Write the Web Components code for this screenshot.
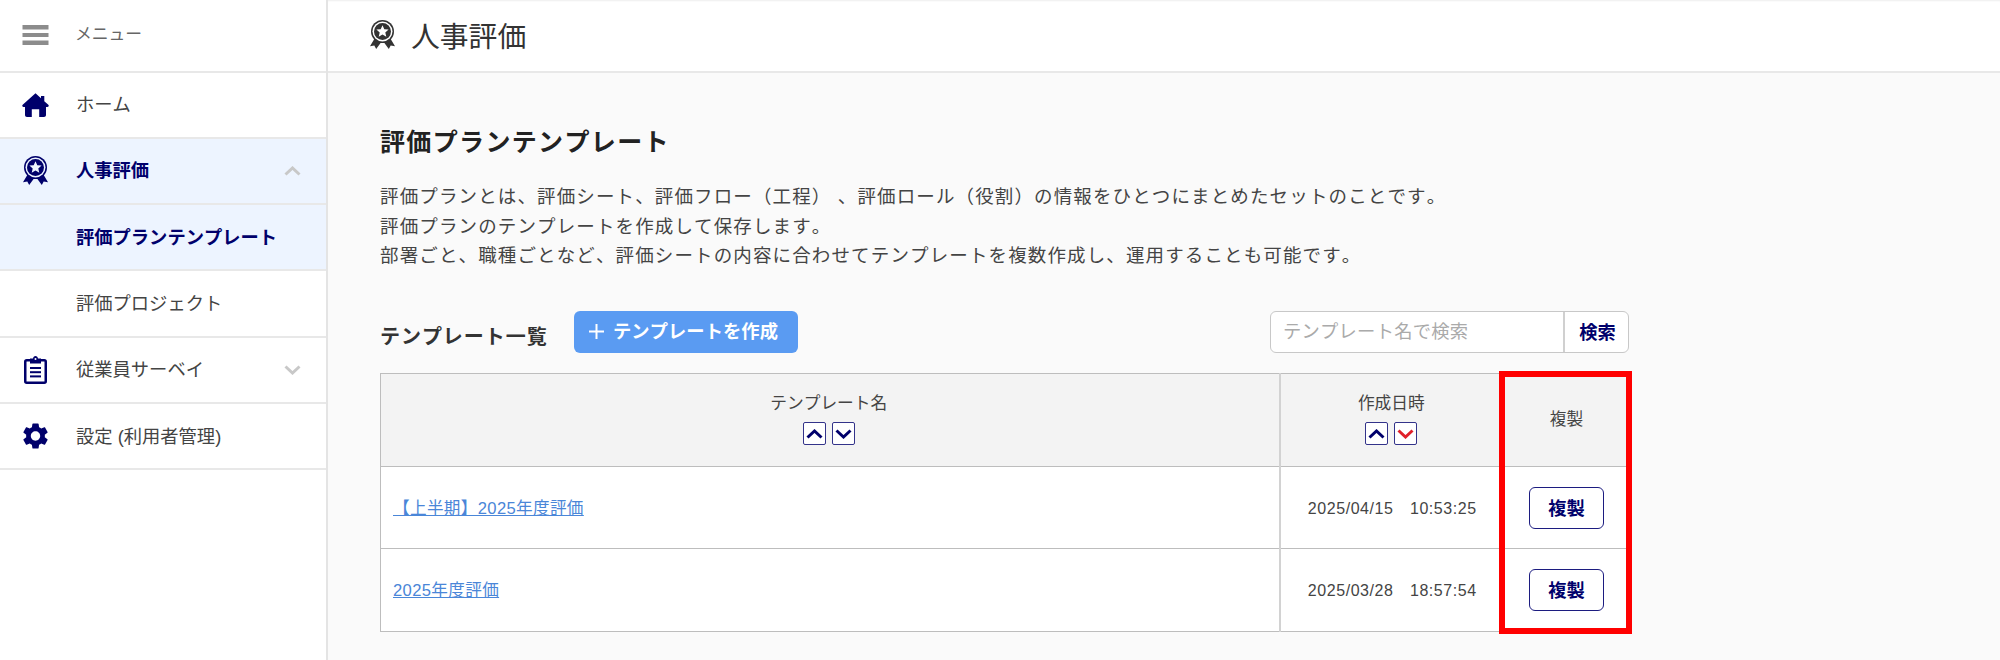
<!DOCTYPE html>
<html lang="ja">
<head>
<meta charset="utf-8">
<title>人事評価</title>
<style>
html,body{margin:0;padding:0;height:660px;overflow:hidden;background:#fafafa;}
body{font-family:"Liberation Sans","Noto Sans CJK JP",sans-serif;color:#333;font-kerning:none;text-spacing-trim:space-all;font-feature-settings:"palt" 0;}
</style>
</head>
<body>
<hr-app></hr-app>
<script>
const NAVY='#00006b';
const ICONS={
 menu:(c)=>`<svg width="27" height="20" viewBox="0 0 27 20"><g fill="${c}"><rect x="0.5" y="0" width="26" height="4.5"/><rect x="0.5" y="8" width="26" height="4"/><rect x="0.5" y="15.5" width="26" height="4.5"/></g></svg>`,
 home:(c)=>`<svg width="27" height="24" viewBox="0 0 27 24"><path fill="${c}" d="M13.5 0.2 L19 5.2 V3 H22.3 V8.2 L26.3 11.8 C27.2 12.7 26.6 14 25.5 14 H24 V22 C24 23.2 23.2 24 22 24 H17.2 V16.2 H9.8 V24 H5 C3.8 24 3 23.2 3 22 V14 H1.5 C0.4 14 -0.2 12.7 0.7 11.8 Z"/></svg>`,
 medal:(c,bg)=>`<svg width="25" height="29" viewBox="0 0 25 29"><path fill="${c}" d="M5.2 17.5 L0 26.2 L4.3 25.4 L6.2 29 L11.5 21.8 Z M19.8 17.5 L25 26.2 L20.7 25.4 L18.8 29 L13.5 21.8 Z"/><circle cx="12.5" cy="11.5" r="11.5" fill="${c}"/><circle cx="12.5" cy="11.5" r="10" fill="${bg}"/><circle cx="12.5" cy="11.5" r="8.5" fill="${c}"/><path fill="${bg}" d="M12.5 5.2 L14.3 9.2 L18.6 9.6 L15.3 12.5 L16.3 16.8 L12.5 14.5 L8.7 16.8 L9.7 12.5 L6.4 9.6 L10.7 9.2 Z"/></svg>`,
 clip:(c)=>`<svg width="23" height="28" viewBox="0 0 23 28"><rect x="1.25" y="4.25" width="20.5" height="22.5" rx="1.5" fill="#fff" stroke="${c}" stroke-width="2.5"/><path fill="${c}" d="M6 2.5 H9 C9.2 .9 10.2 0 11.5 0 C12.8 0 13.8 .9 14 2.5 H17 V7.5 H6 Z"/><circle cx="11.5" cy="3" r="1" fill="#fff"/><g fill="${c}"><rect x="6" y="11" width="11" height="2"/><rect x="6" y="15.2" width="11" height="2"/><rect x="6" y="19.4" width="11" height="2"/></g></svg>`,
 gear:(c)=>`<svg width="25" height="26" viewBox="2.6 2 18.8 20"><path fill="${c}" d="M19.14 12.94c.04-.3.06-.61.06-.94 0-.32-.02-.64-.07-.94l2.03-1.58c.18-.14.23-.41.12-.61l-1.92-3.32c-.12-.22-.37-.29-.59-.22l-2.39.96c-.5-.38-1.03-.7-1.62-.94l-.36-2.54c-.04-.24-.24-.41-.48-.41h-3.84c-.24 0-.43.17-.47.41l-.36 2.54c-.59.24-1.13.57-1.62.94l-2.39-.96c-.22-.08-.47 0-.59.22L2.74 8.87c-.12.21-.08.47.12.61l2.03 1.58c-.05.3-.09.63-.09.94s.02.64.07.94l-2.03 1.58c-.18.14-.23.41-.12.61l1.92 3.32c.12.22.37.29.59.22l2.39-.96c.5.38 1.03.7 1.62.94l.36 2.54c.05.24.24.41.48.41h3.84c.24 0 .44-.17.47-.41l.36-2.54c.59-.24 1.13-.56 1.62-.94l2.39.96c.22.08.47 0 .59-.22l1.92-3.32c.12-.22.07-.47-.12-.61l-2.01-1.58zM12 15.6c-1.98 0-3.6-1.62-3.6-3.6s1.62-3.6 3.6-3.6 3.6 1.62 3.6 3.6-1.62 3.6-3.6 3.6z"/></svg>`,
 up:(c,w=3)=>`<svg width="17" height="10" viewBox="0 0 17 10"><path d="M1.5 8.5 L8.5 2 L15.5 8.5" fill="none" stroke="${c}" stroke-width="${w}"/></svg>`,
 down:(c,w=3)=>`<svg width="17" height="10" viewBox="0 0 17 10"><path d="M1.5 1.5 L8.5 8 L15.5 1.5" fill="none" stroke="${c}" stroke-width="${w}"/></svg>`
};
function define(name,css,html,extra){
  customElements.define(name,class extends HTMLElement{
    constructor(){super();this.attachShadow({mode:'open'});}
    connectedCallback(){
      this.shadowRoot.innerHTML=`<style>${css}</style>`+(typeof html==='function'?html(this):html);
      if(extra)extra(this);
    }
  });
}
define('nav-item',`
 :host{display:flex;box-sizing:border-box;height:66.33px;border-bottom:2px solid #e8e8e8;align-items:center;background:var(--bg,#fff);font-size:18.3px;color:#444;}
 :host([first]){height:72.5px;font-size:16.8px;color:#666;}
 :host([first]) .lb{padding:0 0 1px 0;margin-left:-1px;}
 :host([active]){background:#edf4ff;color:${NAVY};font-weight:700;}
 .ic{width:76px;flex:none;display:flex;justify-content:center;padding-right:6px;box-sizing:border-box;}
 .lb{flex:1;white-space:nowrap;line-height:26px;padding-top:1px;}
 .ch{width:42px;flex:none;display:flex;}
`,(el)=>{
 const i=el.getAttribute('icon'),c=el.getAttribute('chev');
 const bg=el.hasAttribute('active')?'#edf4ff':'#fff';
 const col=i==='menu'?'#8c8c8c':NAVY;
 return `<div class="ic">${i?ICONS[i](col,bg):''}</div><div class="lb"><slot></slot></div>${c?`<div class="ch">${ICONS[c]('#c8c8c8')}</div>`:''}`;
});
define('side-bar',`
 :host{display:block;width:328px;flex:none;box-sizing:border-box;background:#fff;border-right:2px solid #e4e4e4;height:660px;}
`,`<slot></slot>`);
define('top-bar',`
 :host{display:flex;align-items:center;box-sizing:border-box;height:72.5px;background:#fff;border-bottom:2px solid #e8e8e8;padding-left:42px;box-shadow:inset 0 2px 2px -1px #eee;font-size:28.8px;color:#333;}
 .i{display:flex;margin-right:18px;margin-top:-2px;}
 .t{margin-top:-1px;margin-left:-2px;}
`,()=>`<div class="i">${ICONS.medal('#333','#fff')}</div><div class="t"><slot></slot></div>`);
define('blue-button',`
 :host{display:inline-flex;align-items:center;box-sizing:border-box;height:42px;width:224px;padding:0 0 3px 15px;background:#5a9bf2;border-radius:6px;color:#fff;font-size:18.3px;font-weight:700;letter-spacing:.05px;}
 svg{margin-right:9px;flex:none;margin-top:3px;}
`,`<svg width="15" height="15" viewBox="0 0 15 15"><path d="M7.5 0 V15 M0 7.5 H15" stroke="#fff" stroke-width="2"/></svg><slot></slot>`);
define('search-box',`
 :host{display:flex;box-sizing:border-box;width:359px;height:42px;border:1px solid #c8c8c8;border-radius:6px;background:#fff;font-size:18.3px;align-items:stretch;}
 .p{width:294px;box-sizing:border-box;padding-left:12px;color:#aaa;line-height:39px;border-right:2px solid #d0d0d0;white-space:nowrap;letter-spacing:.25px;}
 .b{flex:1;display:flex;align-items:center;justify-content:center;color:${NAVY};font-weight:700;padding:0 0 1px 2px;}
`,()=>`<div class="p">テンプレート名で検索</div><div class="b"><slot></slot></div>`);
define('sort-btns',`
 :host{display:flex;gap:6px;justify-content:center;margin-top:6px;}
 span{display:flex;align-items:center;justify-content:center;box-sizing:border-box;width:23px;height:23px;background:#fff;border:1.5px solid #33338a;border-radius:2px;}
`,(el)=>`<span>${ICONS.up(NAVY)}</span><span>${ICONS.down(el.hasAttribute('red')?'#e0202a':NAVY)}</span>`);
define('copy-btn',`
 :host{display:inline-flex;align-items:center;justify-content:center;box-sizing:border-box;width:75px;height:42px;background:#fff;border:1.5px solid #1c1c80;border-radius:6px;color:${NAVY};font-size:18.3px;font-weight:700;padding-bottom:2px;margin-left:2px;}
`,`<slot></slot>`);
define('template-table',`
 :host{display:block;position:relative;width:1250px;font-size:16.7px;color:#444;}
 table{border-collapse:collapse;table-layout:fixed;width:100%;background:#fff;}
 th,td{border:1px solid #bdbdbd;padding:0;text-align:center;vertical-align:middle;}
 tr>*:nth-child(2){border-left:2px solid #d2d2d2;}
 th{background:#f3f3f3;font-weight:400;height:92px;line-height:24px;}
 th>div{margin-top:-2px;}
 th.a{padding-right:2px;}
 th.b{padding-left:1px;}
 th.c{padding-left:2px;}
 th.c>div{margin-top:0;}
 td{height:79.4px;}
 td.n{text-align:left;padding-left:12px;padding-bottom:2px;}
 a{color:#4a86d8;text-decoration:underline;font-size:16.6px;letter-spacing:.35px;}
 .d{font-size:16px;letter-spacing:.55px;white-space:pre;padding-left:3px;padding-bottom:2px;}
 .red{position:absolute;box-sizing:border-box;top:-2px;bottom:-2px;right:-2px;width:133px;border:6px solid #f00;pointer-events:none;}
`,`<table>
 <colgroup><col style="width:899px"><col style="width:222px"><col></colgroup>
 <tr><th class="a"><div>テンプレート名</div><sort-btns></sort-btns></th><th class="b"><div>作成日時</div><sort-btns red></sort-btns></th><th class="c"><div>複製</div></th></tr>
 <tr><td class="n"><a>【上半期】2025年度評価</a></td><td class="d">2025/04/15　10:53:25</td><td><copy-btn>複製</copy-btn></td></tr>
 <tr><td class="n"><a>2025年度評価</a></td><td class="d">2025/03/28　18:57:54</td><td><copy-btn>複製</copy-btn></td></tr>
</table><div class="red"></div>`);
define('main-panel',`
 :host{display:block;flex:1;background:#fafafa;}
 .c{padding:49.5px 0 0 52px;width:1250px;}
 h1{margin:0;font-size:25px;line-height:40px;letter-spacing:1.35px;font-weight:700;color:#222;white-space:nowrap;}
 p{margin:20px 0 0;font-size:18.5px;line-height:29.6px;letter-spacing:1.13px;color:#444;white-space:nowrap;}
 .tb{display:flex;margin-top:40.2px;align-items:flex-start;}
 h2{margin:10.5px 0 0;width:194px;font-size:20px;line-height:32px;letter-spacing:.95px;font-weight:700;color:#333;white-space:nowrap;}
 .sp{flex:1;}
 .s{margin-right:1px;}
 template-table{margin-top:19.4px;}
`,`<top-bar>人事評価</top-bar><div class="c">
 <h1>評価プランテンプレート</h1>
 <p>評価プランとは、評価シート、評価フロー（工程） 、評価ロール（役割）の情報をひとつにまとめたセットのことです。<br>評価プランのテンプレートを作成して保存します。<br>部署ごと、職種ごとなど、評価シートの内容に合わせてテンプレートを複数作成し、運用することも可能です。</p>
 <div class="tb"><h2>テンプレート一覧</h2><blue-button>テンプレートを作成</blue-button><div class="sp"></div><search-box class="s">検索</search-box></div>
 <template-table></template-table>
</div>`);
define('hr-app',`
 :host{display:flex;width:2000px;height:660px;overflow:hidden;}
`,`<side-bar>
 <nav-item first icon="menu">メニュー</nav-item>
 <nav-item icon="home">ホーム</nav-item>
 <nav-item active icon="medal" chev="up">人事評価</nav-item>
 <nav-item active>評価プランテンプレート</nav-item>
 <nav-item>評価プロジェクト</nav-item>
 <nav-item icon="clip" chev="down">従業員サーベイ</nav-item>
 <nav-item icon="gear">設定 (利用者管理)</nav-item>
</side-bar><main-panel></main-panel>`);
</script>
</body>
</html>
